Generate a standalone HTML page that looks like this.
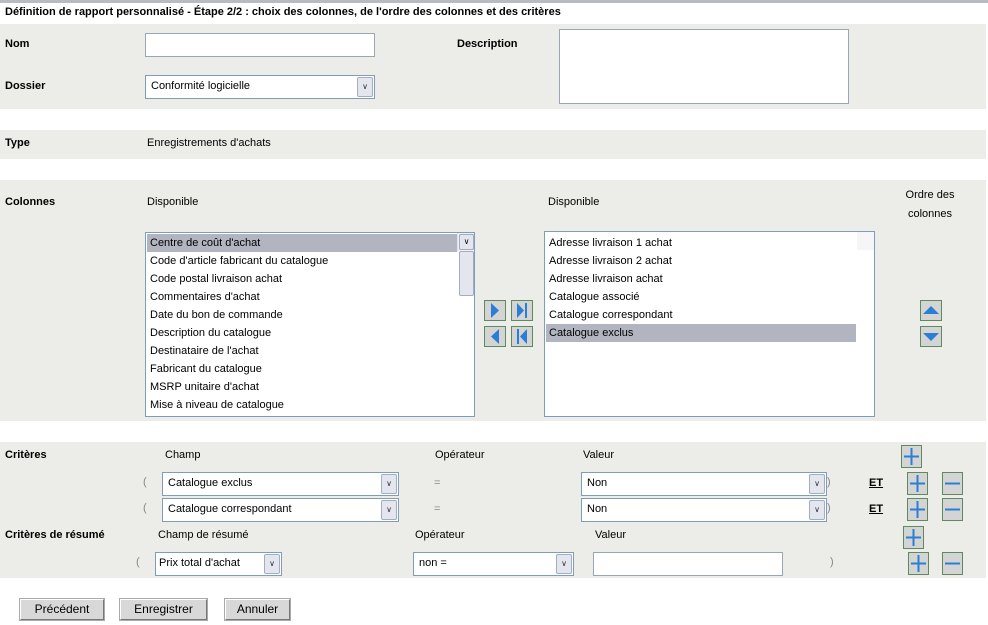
<!DOCTYPE html>
<html><head><meta charset="utf-8"><style>
*{box-sizing:border-box;margin:0;padding:0}
body{width:988px;height:625px;background:#fff;font-family:"Liberation Sans","DejaVu Sans",sans-serif;font-size:11px;color:#000;position:relative;overflow:hidden}
.a{position:absolute;white-space:nowrap}
.b{font-weight:bold}
.p{position:absolute;left:0;width:986px;background:#ecece9}
.in{position:absolute;background:#fff;border:1px solid #9aa5b5}
.sel{position:absolute;background:#fff;border:1px solid #7f9db9;padding-left:5px;line-height:21px;font-size:11px}
.sel .dd{position:absolute;right:1px;top:1px;bottom:1px;width:16px;background:#e4e6ef;border:1px solid #a5acbd;border-radius:2px;font-size:8px;text-align:center;line-height:18px;color:#333}
.list{position:absolute;background:#fff;border:1px solid #7f9db9}
.list div{height:18px;line-height:18px;padding-left:3px;margin-left:1px}
.list .s{background:#b2b4bf}
.sb{position:absolute;right:0;top:0;bottom:0;width:17px;background:#f3f3f6}
.ib{position:absolute;width:22px;height:21px;background:#d4d4d4;border:1px solid #5e8a5e}
.btn{position:absolute;top:599px;height:21px;background:#d8d8d8;border:1px solid #888;border-color:#fff #777 #777 #fff;outline:1px solid #aaa;text-align:center;line-height:19px;font-size:12px}
</style></head><body>
<div class="a" style="left:0;top:0;width:988px;height:3px;background:#b8bcc0"></div>
<div class="a b" style="left:5px;top:6px;font-size:11px">Définition de rapport personnalisé - Étape 2/2 : choix des colonnes, de l'ordre des colonnes et des critères</div>

<div class="p" style="top:24px;height:85px"></div>
<div class="p" style="top:130px;height:29px"></div>
<div class="p" style="top:180px;height:241px"></div>
<div class="p" style="top:442px;height:136px"></div>

<div class="a b" style="left:5px;top:38px">Nom</div>
<div class="in" style="left:145px;top:33px;width:230px;height:24px"></div>
<div class="a b" style="left:457px;top:38px">Description</div>
<div class="in" style="left:559px;top:29px;width:290px;height:75px"></div>
<div class="a b" style="left:5px;top:80px">Dossier</div>
<div class="sel" style="left:145px;top:75px;width:230px;height:24px">Conformité logicielle<div class="dd">&#x2228;</div></div>

<div class="a b" style="left:5px;top:137px">Type</div>
<div class="a" style="left:147px;top:137px">Enregistrements d'achats</div>

<div class="a b" style="left:5px;top:196px">Colonnes</div>
<div class="a" style="left:147px;top:196px">Disponible</div>
<div class="a" style="left:548px;top:196px">Disponible</div>
<div class="a" style="left:890px;top:186px;width:80px;text-align:center;white-space:normal;line-height:19px">Ordre des colonnes</div>

<div class="list" style="left:145px;top:232px;width:330px;height:185px;padding-top:1px">
<div class="s" style="width:310px">Centre de coût d'achat</div>
<div>Code d'article fabricant du catalogue</div>
<div>Code postal livraison achat</div>
<div>Commentaires d'achat</div>
<div>Date du bon de commande</div>
<div>Description du catalogue</div>
<div>Destinataire de l'achat</div>
<div>Fabricant du catalogue</div>
<div>MSRP unitaire d'achat</div>
<div>Mise à niveau de catalogue</div>
<div class="sb" style="background:#f0f0f4;border-left:1px solid #e0e0e8">
<div style="position:absolute;left:1px;top:1px;width:15px;height:16px;background:#e4e6ef;border:1px solid #a5acbd;border-radius:2px;font-size:8px;text-align:center;line-height:14px;padding:0;margin:0">&#x2227;</div>
<div style="position:absolute;left:1px;top:18px;width:15px;height:45px;background:#e4e6ef;border:1px solid #a5acbd;border-radius:2px;padding:0;margin:0"></div>
<div style="position:absolute;left:1px;bottom:1px;width:15px;height:16px;background:#e4e6ef;border:1px solid #a5acbd;border-radius:2px;font-size:8px;text-align:center;line-height:14px;padding:0;margin:0">&#x2228;</div>
</div>
</div>

<div class="list" style="left:544px;top:231px;width:331px;height:186px;padding-top:2px">
<div>Adresse livraison 1 achat</div>
<div>Adresse livraison 2 achat</div>
<div>Adresse livraison achat</div>
<div>Catalogue associé</div>
<div>Catalogue correspondant</div>
<div class="s" style="width:310px">Catalogue exclus</div>
<div class="sb" style="background:#f6f6f8"></div>
</div>

<svg class="a" style="left:484px;top:300px" width="52" height="48">
<g fill="#d4d4d4" stroke="#5e8a5e"><rect x="0.5" y="0.5" width="21" height="20"/><rect x="27.5" y="0.5" width="21" height="20"/><rect x="0.5" y="26.5" width="21" height="20"/><rect x="27.5" y="26.5" width="21" height="20"/></g>
<g fill="#2a7fd4"><path d="M7 3L15 10.5L7 18Z"/><path d="M33 3L40 10.5L33 18Z"/><rect x="41" y="3" width="2" height="15"/><path d="M15 29L7 36.5L15 44Z"/><path d="M43 29L36 36.5L43 44Z"/><rect x="33" y="29" width="2" height="15"/></g>
</svg>
<svg class="a" style="left:920px;top:300px" width="23" height="48">
<g fill="#d4d4d4" stroke="#5e8a5e"><rect x="0.5" y="0.5" width="21" height="20"/><rect x="0.5" y="26.5" width="21" height="20"/></g>
<g fill="#2a7fd4"><path d="M3 14L11 6L19 14Z"/><path d="M3 33L19 33L11 41Z"/></g>
</svg>

<div class="a b" style="left:5px;top:449px">Critères</div>
<div class="a" style="left:165px;top:449px">Champ</div>
<div class="a" style="left:435px;top:449px">Opérateur</div>
<div class="a" style="left:583px;top:449px">Valeur</div>

<div class="a" style="left:143px;top:476px;color:#888">(</div>
<div class="sel" style="left:162px;top:472px;width:237px;height:24px">Catalogue exclus<div class="dd">&#x2228;</div></div>
<div class="a" style="left:434px;top:477px;color:#888">=</div>
<div class="sel" style="left:581px;top:472px;width:246px;height:24px">Non<div class="dd">&#x2228;</div></div>
<div class="a" style="left:827px;top:476px;color:#888">)</div>
<div class="a b" style="left:869px;top:477px;text-decoration:underline">ET</div>

<div class="a" style="left:143px;top:502px;color:#888">(</div>
<div class="sel" style="left:162px;top:498px;width:237px;height:24px">Catalogue correspondant<div class="dd">&#x2228;</div></div>
<div class="a" style="left:434px;top:503px;color:#888">=</div>
<div class="sel" style="left:581px;top:498px;width:246px;height:24px">Non<div class="dd">&#x2228;</div></div>
<div class="a" style="left:827px;top:502px;color:#888">)</div>
<div class="a b" style="left:869px;top:503px;text-decoration:underline">ET</div>

<div class="a b" style="left:5px;top:529px">Critères de résumé</div>
<div class="a" style="left:158px;top:529px">Champ de résumé</div>
<div class="a" style="left:415px;top:529px">Opérateur</div>
<div class="a" style="left:595px;top:529px">Valeur</div>

<div class="a" style="left:136px;top:556px;color:#888">(</div>
<div class="sel" style="left:155px;top:552px;width:127px;height:24px;padding-left:3px">Prix total d'achat<div class="dd">&#x2228;</div></div>
<div class="sel" style="left:413px;top:552px;width:161px;height:24px">non =<div class="dd">&#x2228;</div></div>
<div class="in" style="left:593px;top:552px;width:190px;height:24px"></div>
<div class="a" style="left:830px;top:556px;color:#888">)</div>

<svg class="a" style="left:0;top:440px" width="988" height="140">
<g fill="#d4d4d4" stroke="#5e8a5e">
<rect x="901.5" y="5.5" width="20" height="22"/>
<rect x="907.5" y="32.5" width="20" height="22"/><rect x="942.5" y="32.5" width="20" height="22"/>
<rect x="907.5" y="58.5" width="20" height="22"/><rect x="942.5" y="58.5" width="20" height="22"/>
<rect x="903.5" y="86.5" width="20" height="22"/>
<rect x="908.5" y="112.5" width="20" height="22"/><rect x="942.5" y="112.5" width="20" height="22"/>
</g>
<g stroke="#2a7fd4" stroke-width="2" fill="none">
<path d="M904 16.5H919M911.5 8V25"/>
<path d="M910 43.5H925M917.5 35V52M945 43.5H960"/>
<path d="M910 69.5H925M917.5 61V78M945 69.5H960"/>
<path d="M906 97.5H921M913.5 89V106"/>
<path d="M911 123.5H926M918.5 115V132M945 123.5H960"/>
</g>
</svg>

<div class="btn" style="left:20px;width:84px">Précédent</div>
<div class="btn" style="left:120px;width:87px">Enregistrer</div>
<div class="btn" style="left:225px;width:65px">Annuler</div>
</body></html>
